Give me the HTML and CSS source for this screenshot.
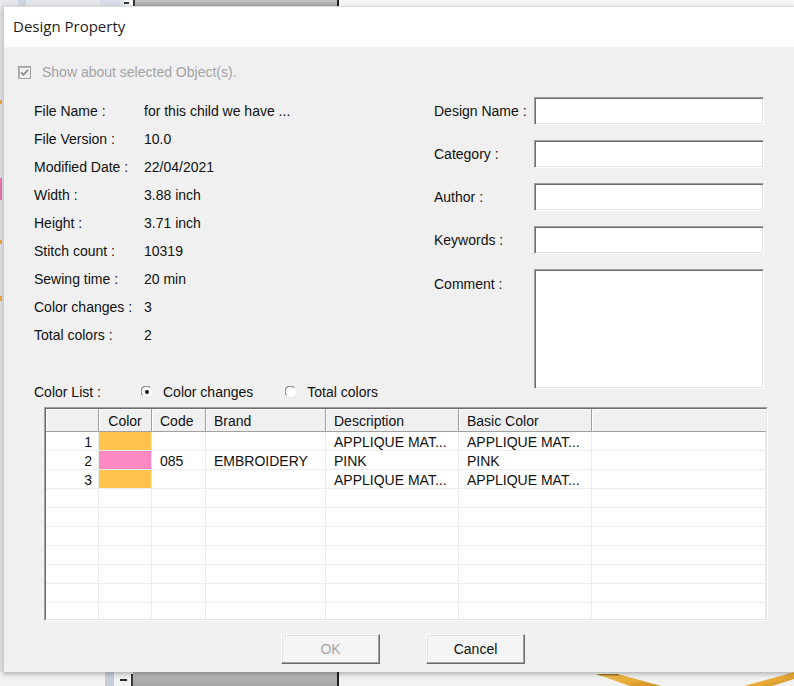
FILE: index.html
```html
<!DOCTYPE html>
<html>
<head>
<meta charset="utf-8">
<title>Design Property</title>
<link rel="stylesheet" href="styles.css">
</head>
<body>
<div class="screen">
  <svg class="bg-top" width="794" height="6" viewBox="0 0 794 6">
    <defs>
      <linearGradient id="barg" x1="0" y1="0" x2="0" y2="1">
        <stop offset="0" stop-color="#c4c4c4"/>
        <stop offset="1" stop-color="#a6a6a6"/>
      </linearGradient>
    </defs>
    <rect x="0" y="0" width="794" height="6" fill="#f6f6f6"/>
    <rect x="0" y="0" width="125" height="6" fill="#e3e6ea"/>
    <rect x="18" y="0" width="8" height="6" fill="#cdd6e2"/>
    <rect x="100" y="0" width="20" height="6" fill="#d9dee8"/>
    <rect x="124" y="2" width="5" height="2" fill="#333"/>
    <rect x="133" y="0" width="2" height="6" fill="#3a3a3a"/>
    <rect x="135" y="0" width="202" height="6" fill="url(#barg)"/>
    <rect x="337" y="0" width="2" height="6" fill="#1e1e1e"/>
  </svg>

  <div class="middle">
    <svg class="bg-left" width="3" height="666" viewBox="0 0 3 666">
      <rect x="0" y="0" width="3" height="666" fill="#e8e8e8"/>
      <rect x="0" y="94" width="2" height="4" fill="#f0b040"/>
      <rect x="0" y="172" width="2" height="22" fill="#f07ab4"/>
      <rect x="0" y="234" width="2" height="4" fill="#f0b040"/>
      <rect x="0" y="290" width="2" height="5" fill="#f0b040"/>
    </svg>

    <div class="dialog">
      <div class="titlebar">Design Property</div>
      <div class="content">
        <div class="chk-row">
          <svg class="chk" width="13" height="13" viewBox="0 0 13 13">
            <rect x="0.5" y="0.5" width="12" height="12" fill="#f0f0f0" stroke="#a0a0a0"/>
            <path d="M1.5 11.5 V1.5 H11.5" fill="none" stroke="#b8b8b8"/>
            <path d="M3 6.3 L5.4 8.8 L10 3.8" fill="none" stroke="#8a8a8a" stroke-width="1.8"/>
          </svg>
          <span>Show about selected Object(s).</span>
        </div>

        <div class="main">
          <div class="left">
            <div class="info">
              <div class="info-row"><span class="k">File Name :</span><span class="v">for this child we have ...</span></div>
              <div class="info-row"><span class="k">File Version :</span><span class="v">10.0</span></div>
              <div class="info-row"><span class="k">Modified Date :</span><span class="v">22/04/2021</span></div>
              <div class="info-row"><span class="k">Width :</span><span class="v">3.88 inch</span></div>
              <div class="info-row"><span class="k">Height :</span><span class="v">3.71 inch</span></div>
              <div class="info-row"><span class="k">Stitch count :</span><span class="v">10319</span></div>
              <div class="info-row"><span class="k">Sewing time :</span><span class="v">20 min</span></div>
              <div class="info-row"><span class="k">Color changes :</span><span class="v">3</span></div>
              <div class="info-row"><span class="k">Total colors :</span><span class="v">2</span></div>
            </div>
            <div class="list-row">
              <span class="list-label">Color List :</span>
              <span class="radio">
                <svg width="12" height="12" viewBox="0 0 12 12">
                  <circle cx="6" cy="6" r="5.5" fill="#fff"/>
                  <path d="M1.6 9.2 A5.3 5.3 0 0 1 9.2 1.6" fill="none" stroke="#8a8a8a" stroke-width="1.2"/>
                  <path d="M10.4 2.8 A5.3 5.3 0 0 1 2.8 10.4" fill="none" stroke="#e3e3e3" stroke-width="1"/>
                  <circle cx="6" cy="6" r="2" fill="#111"/>
                </svg>
                <span>Color changes</span>
              </span>
              <span class="radio second">
                <svg width="12" height="12" viewBox="0 0 12 12">
                  <circle cx="6" cy="6" r="5.5" fill="#fff"/>
                  <path d="M1.6 9.2 A5.3 5.3 0 0 1 9.2 1.6" fill="none" stroke="#8a8a8a" stroke-width="1.2"/>
                  <path d="M10.4 2.8 A5.3 5.3 0 0 1 2.8 10.4" fill="none" stroke="#e3e3e3" stroke-width="1"/>
                </svg>
                <span>Total colors</span>
              </span>
            </div>
          </div>

          <div class="fields">
            <span class="f-label">Design Name :</span><div class="box"></div>
            <span class="f-label">Category :</span><div class="box"></div>
            <span class="f-label">Author :</span><div class="box"></div>
            <span class="f-label">Keywords :</span><div class="box"></div>
            <span class="f-label top">Comment :</span><div class="box tall"></div>
          </div>
        </div>

        <div class="grid-box">
          <div class="grid-inner">
            <table class="grid">
              <colgroup>
                <col class="c-num"><col class="c-color"><col class="c-code"><col class="c-brand"><col class="c-desc"><col class="c-basic"><col class="c-rest">
              </colgroup>
              <thead>
                <tr class="head">
                  <th></th><th class="center">Color</th><th>Code</th><th>Brand</th><th>Description</th><th>Basic Color</th><th class="last"></th>
                </tr>
              </thead>
              <tbody>
                <tr><td class="num">1</td><td class="sw orange"></td><td></td><td></td><td>APPLIQUE MAT...</td><td>APPLIQUE MAT...</td><td></td></tr>
                <tr><td class="num">2</td><td class="sw pink"></td><td>085</td><td>EMBROIDERY</td><td>PINK</td><td>PINK</td><td></td></tr>
                <tr><td class="num">3</td><td class="sw orange"></td><td></td><td></td><td>APPLIQUE MAT...</td><td>APPLIQUE MAT...</td><td></td></tr>
                <tr><td></td><td></td><td></td><td></td><td></td><td></td><td></td></tr>
                <tr><td></td><td></td><td></td><td></td><td></td><td></td><td></td></tr>
                <tr><td></td><td></td><td></td><td></td><td></td><td></td><td></td></tr>
                <tr><td></td><td></td><td></td><td></td><td></td><td></td><td></td></tr>
                <tr><td></td><td></td><td></td><td></td><td></td><td></td><td></td></tr>
                <tr><td></td><td></td><td></td><td></td><td></td><td></td><td></td></tr>
                <tr><td></td><td></td><td></td><td></td><td></td><td></td><td></td></tr>
              </tbody>
            </table>
          </div>
        </div>

        <div class="buttons">
          <button class="btn disabled" type="button">OK</button>
          <button class="btn" type="button">Cancel</button>
        </div>
      </div>
    </div>
  </div>

  <svg class="bg-bottom" width="794" height="14" viewBox="0 0 794 14">
    <defs>
      <linearGradient id="barg2" x1="0" y1="0" x2="0" y2="1">
        <stop offset="0" stop-color="#bdbdbd"/>
        <stop offset="1" stop-color="#a4a4a4"/>
      </linearGradient>
      <linearGradient id="gold" x1="0" y1="0" x2="1" y2="1">
        <stop offset="0" stop-color="#f4c14e"/>
        <stop offset="0.6" stop-color="#e6a935"/>
        <stop offset="1" stop-color="#c98d24"/>
      </linearGradient>
    </defs>
    <rect x="0" y="0" width="794" height="14" fill="#f2f2f2"/>
    <rect x="105" y="0" width="9" height="14" fill="#c8cdd9"/>
    <rect x="120" y="7" width="7" height="2" fill="#2e2e2e"/>
    <rect x="131" y="2" width="2" height="12" fill="#3a3a3a"/>
    <rect x="133" y="0" width="205" height="14" fill="url(#barg2)"/>
    <rect x="337" y="0" width="2" height="14" fill="#1e1e1e"/>
    <polygon points="596,2 618,2 661,14 630,14" fill="url(#gold)"/>
    <polygon points="596,2 618,2 620,3.5 600,3.5" fill="#a87a22"/>
    <polygon points="744,14 772,14 794,7 794,0 784,3" fill="url(#gold)"/>
  </svg>
</div>
</body>
</html>
```

FILE: styles.css
```css
* {
  box-sizing: border-box;
}

html, body {
  margin: 0;
  padding: 0;
}

body {
  width: 794px;
  height: 686px;
  overflow: hidden;
  background: #f2f2f2;
  font-family: "Liberation Sans", Arial, sans-serif;
  font-size: 14px;
  color: #111;
}

.screen {
  display: flex;
  flex-direction: column;
  width: 794px;
  height: 686px;
}

.bg-top,
.bg-bottom,
.bg-left {
  display: block;
  flex: none;
}

.middle {
  display: flex;
  height: 666px;
  flex: none;
}

.dialog {
  position: relative;
  z-index: 1;
  flex: 1;
  height: 666px;
  background: #f0f0f0;
  border-left: 1px solid #cfcfcf;
  border-top: 1px solid #dadada;
  box-shadow: 0 2px 5px rgba(0, 0, 0, 0.28);
  display: flex;
  flex-direction: column;
}

.titlebar {
  height: 40px;
  flex: none;
  background: #ffffff;
  display: flex;
  align-items: center;
  padding-left: 9px;
  padding-bottom: 2px;
  font-family: "Open Sans", "Noto Sans", sans-serif;
  font-size: 15px;
  color: #1c1c1c;
}

.content {
  flex: 1;
  display: flex;
  flex-direction: column;
}

.chk-row {
  display: flex;
  align-items: center;
  gap: 11px;
  height: 20px;
  margin-top: 15px;
  padding-left: 14px;
  color: #a3a3a3;
}

.chk {
  display: block;
  flex: none;
}

.main {
  display: flex;
  margin-top: 15px;
  padding-left: 30px;
}

.left {
  width: 400px;
  flex: none;
}

.info-row {
  display: flex;
  align-items: center;
  height: 28px;
}

.info-row .k {
  width: 110px;
  flex: none;
}

.list-row {
  display: flex;
  align-items: center;
  height: 20px;
  margin-top: 33px;
}

.list-label {
  width: 107px;
  flex: none;
}

.radio {
  display: flex;
  align-items: center;
  gap: 10px;
}

.radio svg {
  display: block;
  flex: none;
}

.radio.second {
  margin-left: 32px;
}

.fields {
  display: grid;
  grid-template-columns: 100px 230px;
  row-gap: 15px;
  align-content: start;
}

.f-label {
  align-self: center;
}

.f-label.top {
  align-self: start;
  padding-top: 7px;
}

.box {
  height: 28px;
  background: #ffffff;
  border: 1px solid;
  border-color: #a0a0a0 #ffffff #ffffff #a0a0a0;
  box-shadow: inset 1px 1px 0 #6d6d6d, inset -1px -1px 0 #e3e3e3;
}

.box.tall {
  height: 120px;
}

.grid-box {
  margin-top: 5px;
  margin-left: 40px;
  width: 724px;
  height: 214px;
  border: 1px solid;
  border-color: #a0a0a0 #ffffff #ffffff #a0a0a0;
}

.grid-inner {
  width: 100%;
  height: 100%;
  overflow: hidden;
  background: #ffffff;
  border: 1px solid;
  border-color: #6d6d6d #e6e6e6 #e6e6e6 #6d6d6d;
}

.grid {
  width: 720px;
  table-layout: fixed;
  border-collapse: separate;
  border-spacing: 0;
}

.c-num { width: 53px; }
.c-color { width: 53px; }
.c-code { width: 54px; }
.c-brand { width: 120px; }
.c-desc { width: 133px; }
.c-basic { width: 133px; }
.c-rest { width: 174px; }

.grid tr {
  height: 19px;
}

.grid tr.head {
  height: 23px;
}

.grid th {
  background: #f0f0f0;
  font-weight: normal;
  text-align: left;
  padding: 2px 7px 0 8px;
  line-height: 16px;
  border-right: 1px solid #a0a0a0;
  border-bottom: 1px solid #a0a0a0;
  box-shadow: inset 1px 1px 0 #ffffff;
  white-space: nowrap;
  overflow: hidden;
  color: #111;
}

.grid th.center {
  text-align: center;
  padding-left: 7px;
}

.grid th.last {
  border-right: none;
}

.grid td {
  padding: 3px 7px 0 8px;
  border-right: 1px solid #ebebeb;
  border-bottom: 1px solid #ededed;
  white-space: nowrap;
  overflow: hidden;
  line-height: 15px;
  color: #111;
}

.grid td.num {
  text-align: right;
  padding-right: 6px;
}

.grid td.orange {
  background: #ffc24c;
}

.grid td.pink {
  background: #fb88c0;
}

.buttons {
  display: flex;
  gap: 46px;
  margin-top: 13px;
  padding-left: 277px;
}

.btn {
  width: 99px;
  height: 30px;
  padding: 0 0 1px 0;
  background: #f4f4f4;
  border: 1px solid;
  border-color: #ffffff #6d6d6d #6d6d6d #ffffff;
  box-shadow: inset -1px -1px 0 #a0a0a0, inset 1px 1px 0 #e3e3e3;
  font-family: "Liberation Sans", Arial, sans-serif;
  font-size: 14px;
  color: #111;
}

.btn.disabled {
  color: #a6a6a6;
}
```
